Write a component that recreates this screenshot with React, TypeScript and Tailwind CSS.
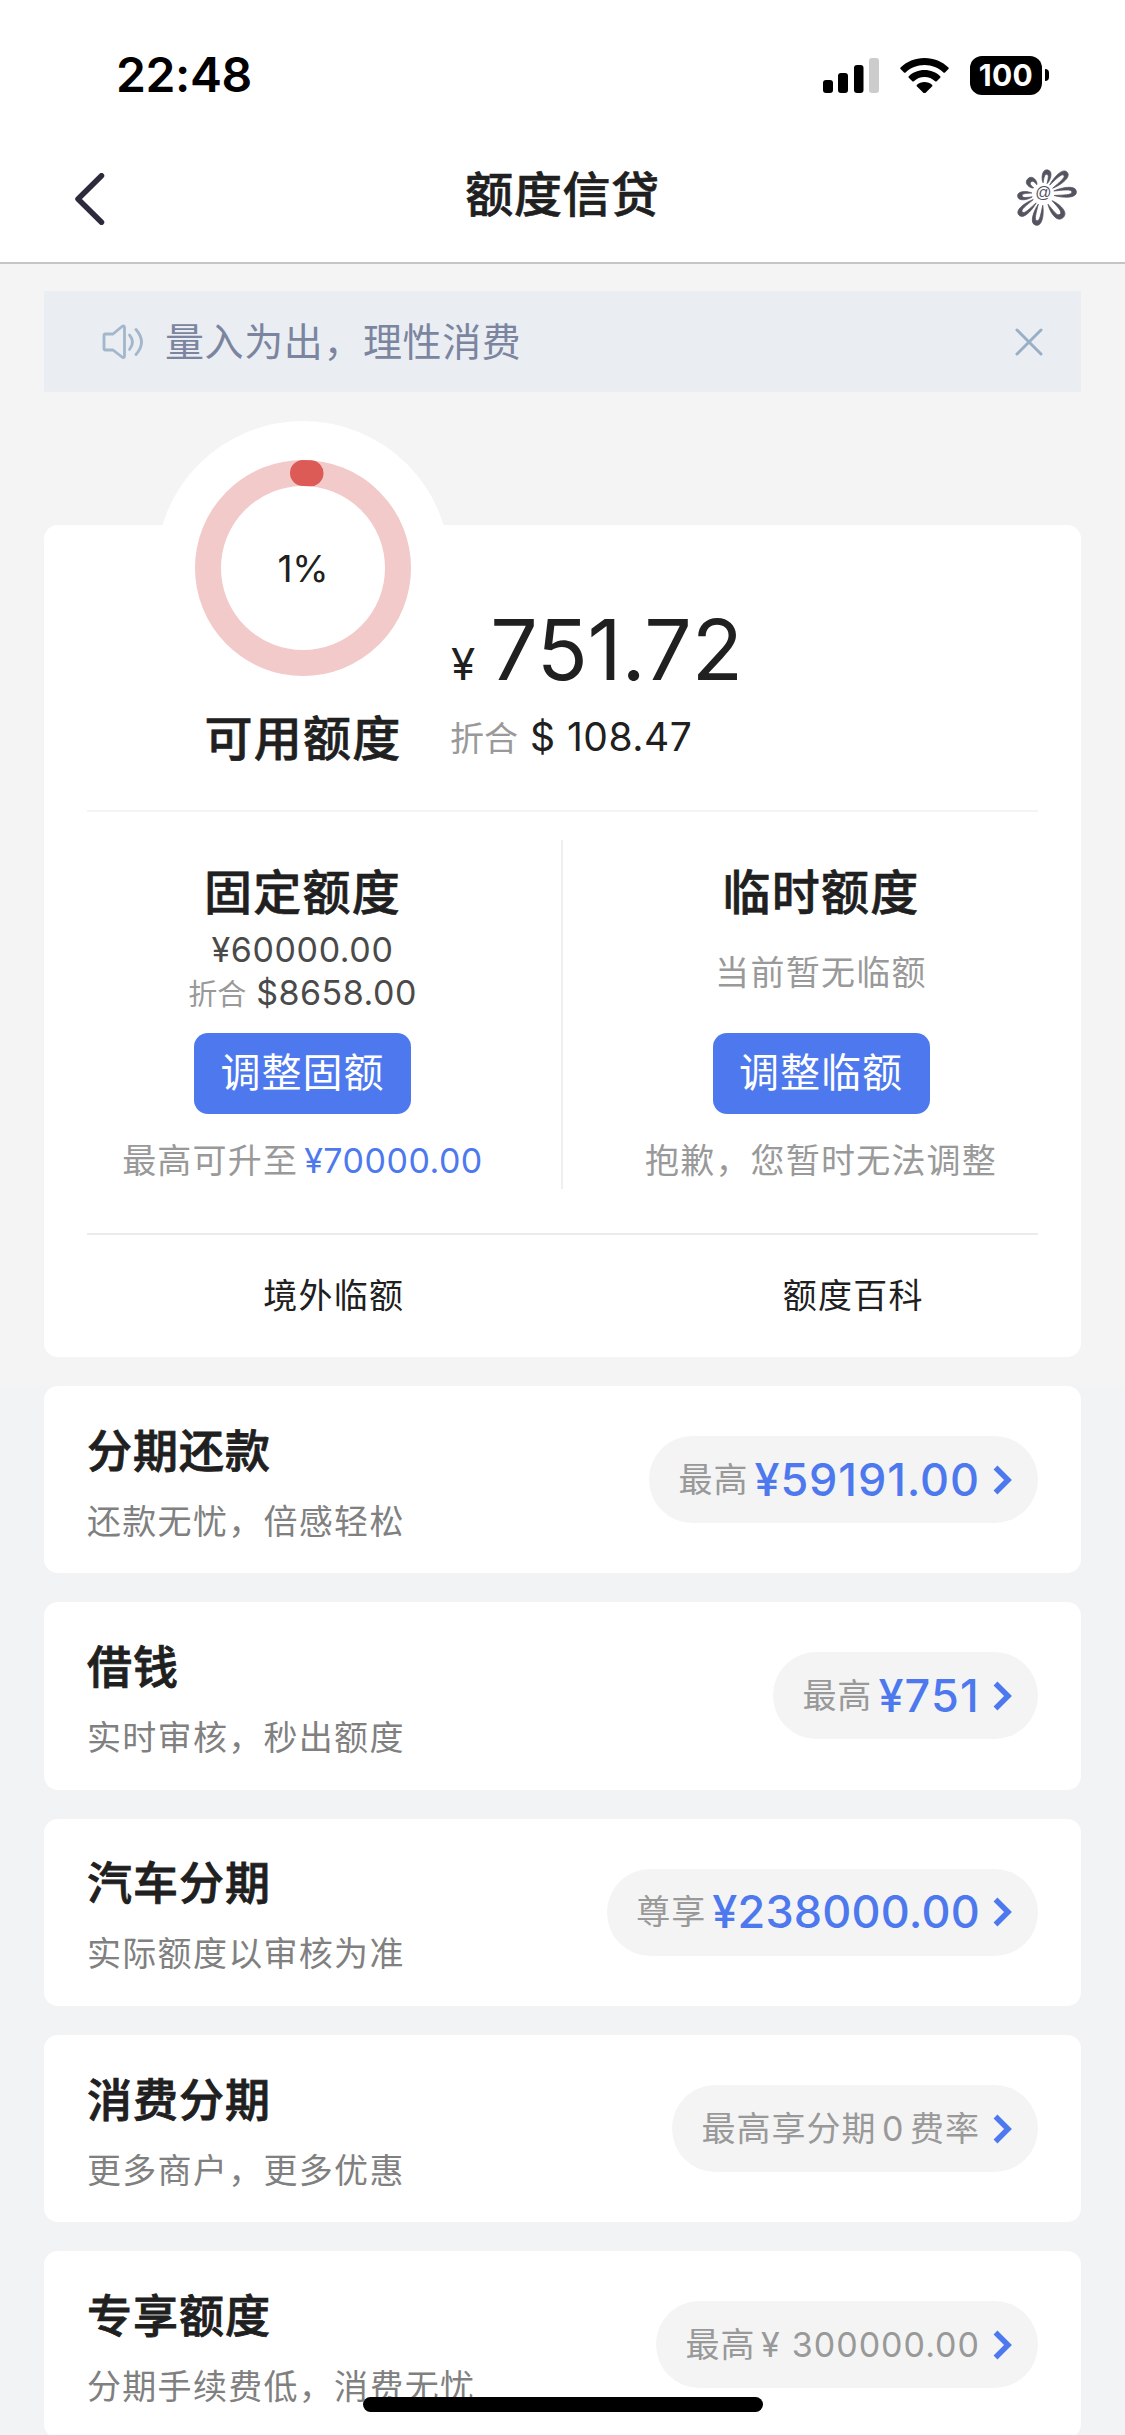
import type { ReactNode } from 'react';

type Product = {
  id: string;
  title: string;
  desc: string;
  label: string;
  amount?: string;
  amountTracking?: string;
};

const products: Product[] = [
  { id: 'repay', title: '分期还款', desc: '还款无忧，倍感轻松', label: '最高', amount: '¥59191.00', amountTracking: 'tracking-[0.9px]' },
  { id: 'loan', title: '借钱', desc: '实时审核，秒出额度', label: '最高', amount: '¥751', amountTracking: 'tracking-[1.200px]' },
  { id: 'car', title: '汽车分期', desc: '实际额度以审核为准', label: '尊享', amount: '¥238000.00', amountTracking: 'tracking-[0.2px]' },
  { id: 'consume', title: '消费分期', desc: '更多商户，更多优惠', label: '最高享分期 0 费率' },
  { id: 'exclusive', title: '专享额度', desc: '分期手续费低，消费无忧', label: '最高 ¥\u00a0 300000.00' },
];

// angle in degrees, length from the flower centre, half width
const petals = [
  [-79, 24.5, 4],
  [-42, 32.5, 4.4],
  [-4, 33.5, 4.6],
  [50, 31, 5.4],
  [103, 32, 4.6],
  [139, 32, 4.4],
  [175, 25.5, 3.8],
  [225, 21.5, 4.4],
];

function StatusBar() {
  return (
    <div className="flex h-[150px] items-center pl-[116px] pr-[76px]">
      <span className="text-[48px] font-semibold leading-none tracking-[-0.4px] text-black">22:48</span>
      <div className="ml-auto flex items-center">
        <svg className="mr-[21px] h-[35px] w-[56px]" viewBox="0 0 56 35">
          <rect x="0" y="22" width="10" height="13" rx="3" />
          <rect x="15" y="15" width="10" height="20" rx="3" />
          <rect x="31" y="7" width="9.5" height="28" rx="3" />
          <rect x="46" y="0" width="10" height="35" rx="3" fill="#cccccc" />
        </svg>
        <svg className="mr-[21px] h-[35px] w-[49px]" viewBox="0 0 49 35">
          <path d="M24.5 0C34 0 42.500 3.700 48.400 9.500Q49.200 10.300 48.400 11.100L45 14.400Q44.200 15.100 43.400 14.400C38.500 9.700 31.900 6.900 24.500 6.900C17.100 6.900 10.500 9.700 5.600 14.400Q4.800 15.100 4 14.400L.6 11.100Q-.2 10.300 .6 9.500C6.500 3.700 15 0 24.500 0Z" />
          <path d="M24.5 12.100C30.700 12.100 36.200 14.400 40.200 18.200Q41 19 40.200 19.800L36.700 23.200Q36 23.900 35.100 23.200C32.300 20.600 28.600 19 24.500 19C20.400 19 16.700 20.600 13.900 23.200Q13 23.900 12.300 23.200L8.800 19.800Q8 19 8.800 18.200C12.800 14.400 18.300 12.100 24.500 12.100Z" />
          <path d="M24.5 24.100C27.400 24.100 30 25.100 32 26.800Q32.900 27.600 32 28.500L25.400 34.900Q24.500 35.700 23.600 34.900L17 28.500Q16.100 27.600 17 26.800C19 25.100 21.600 24.100 24.500 24.100Z" />
        </svg>
        <div className="flex h-[39px] w-[72px] items-center justify-center rounded-[12px] bg-black text-[30px] font-bold leading-none tracking-[0.3px] text-white">
          100
        </div>
        <div className="ml-[3px] h-[12px] w-[4px] rounded-r-full bg-black" />
      </div>
    </div>
  );
}

function Flower() {
  return (
    <svg className="h-[64px] w-[66px]" viewBox="-31 -28 66 64">
      <g fill="#545360" fillRule="evenodd" stroke="#545360" strokeWidth="0.700">
        {petals.map(([angle, len, w]) => (
          <path
            key={angle}
            transform={`rotate(${angle})`}
            d={`M11 ${-w * 0.5}C${len * 0.55} ${-w * 1.1} ${len} ${-w * 1.6} ${len} 0C${len} ${w * 1.6} ${len * 0.55} ${w * 1.1} 11 ${w * 0.5}C${len * 0.6} ${w * 0.5} ${len - 4.5} ${w * 0.7} ${len - 4.5} 0C${len - 4.5} ${-w * 0.7} ${len * 0.6} ${-w * 0.5} 11 ${-w * 0.5}Z`}
          />
        ))}
      </g>
      <text x="0" y="3.800" textAnchor="middle" fill="#545360" className="font-['Liberation_Sans'] text-[16px] italic">
        @
      </text>
    </svg>
  );
}

function NavBar() {
  return (
    <div className="flex h-[114px] items-start justify-between border-b-2 border-[#c4c4c6] pl-[75px] pr-[47px]">
      <svg className="mt-[23px] h-[52px] w-[38px]" viewBox="0 0 38 52" fill="none" stroke="#2d2a3e" strokeWidth="5.500" strokeLinecap="round" strokeLinejoin="round">
        <path d="M26.500 2.750L3 26L26.500 49.250" />
      </svg>
      <h1 className="mt-[15px] text-[48px] font-medium leading-[60px] tracking-[0.6px] text-[#202020] [-webkit-text-stroke:0.6px]">额度信贷</h1>
      <div className="mt-[16px]">
        <Flower />
      </div>
    </div>
  );
}

function Notice() {
  return (
    <div className="mx-[44px] mt-[27px] flex h-[101px] items-center bg-[#eaedf2] pl-[58px] pr-[38px]">
      <svg className="h-[36px] w-[42px]" viewBox="0 0 42 36" fill="none" stroke="#a3b7cc" strokeWidth="2.800" strokeLinecap="round" strokeLinejoin="round">
        <path d="M3.500 10H11L20 2.500Q22.500 1 22.500 3.500V32Q22.500 34.500 20 33L11 26H3.500Q2 26 2 24.500V11.500Q2 10 3.500 10Z" />
        <path d="M27.500 11Q33.500 18 27.500 25.500" />
        <path d="M34 5.500Q45 18 34 30.500" />
      </svg>
      <span className="ml-[21px] text-[39px] leading-[50px] tracking-[0.6px] text-[#7b859f]">量入为出，理性消费</span>
      <svg className="ml-auto h-[28px] w-[28px]" viewBox="0 0 28 28" stroke="#99afc6" strokeWidth="3" strokeLinecap="round">
        <path d="M2 2L26 26M26 2L2 26" />
      </svg>
    </div>
  );
}

function UsageRing() {
  return (
    <div className="-mt-[104px] flex w-[294px] flex-col items-center">
      <div className="grid h-[294px] w-[294px] place-items-center rounded-full bg-white">
        <svg className="col-start-1 row-start-1 h-[216px] w-[216px]" viewBox="0 0 216 216" fill="none" strokeWidth="26">
          <circle cx="108" cy="108" r="95" stroke="#f2caca" />
          <path d="M108 13A95 95 0 0 1 115.500 13.300" stroke="#dc5b56" strokeLinecap="round" />
        </svg>
        <span className="col-start-1 row-start-1 text-[37px] leading-none tracking-[-0.2px]">1%</span>
      </div>
      <div className="text-[48px] font-medium leading-[48px] tracking-[1.200px] [-webkit-text-stroke:0.6px]">可用额度</div>
    </div>
  );
}

type LimitProps = {
  title: string;
  action: string;
  detail: ReactNode;
  hint: ReactNode;
};

function LimitColumn({ title, action, detail, hint }: LimitProps) {
  return (
    <div className="flex flex-col items-center pt-[53px]">
      <h2 className="text-[48px] font-medium leading-[55px] tracking-[1.200px] [-webkit-text-stroke:0.6px]">{title}</h2>
      <div className="mt-[9px] flex h-[86px] flex-col items-center justify-center">{detail}</div>
      <button className="mt-[18px] h-[81px] w-[217px] rounded-[14px] bg-[#4e79ee] pb-[2px] text-[40px] leading-none tracking-[1px] text-white">
        {action}
      </button>
      <div className="mt-[25px] text-[34px] leading-[44px] tracking-[1.200px] text-[#999999]">{hint}</div>
    </div>
  );
}

function SummaryCard() {
  return (
    <section className="mx-[44px] mt-[133px] h-[832px] rounded-[14px] bg-white text-[#202020]">
      <div className="mx-[43px] flex h-[287px] border-b-2 border-[#f4f4f4] pl-[69px]">
        <UsageRing />
        <div className="pt-[83px]">
          <div className="flex h-[84px] items-baseline leading-[84px]">
            <span className="ml-px text-[44px]">¥</span>
            <span className="ml-[15px] text-[84px] tracking-[-0.2px]">751.72</span>
          </div>
          <div className="mt-[22px] flex h-[46px] items-baseline leading-[46px]">
            <span className="text-[34px] text-[#999999]">折合</span>
            <span className="ml-[12px] text-[39px] tracking-[0.5px]">$ 108.47</span>
          </div>
        </div>
      </div>
      <div className="relative grid h-[421px] grid-cols-[517px_520px]">
        <LimitColumn
          title="固定额度"
          action="调整固额"
          detail={
            <>
              <span className="text-[34px] leading-[43px] tracking-[0.6px] text-[#4a4a4a]">¥60000.00</span>
              <span className="flex items-baseline leading-[43px]">
                <span className="text-[29px] text-[#999999]">折合</span>
                <span className="ml-[10px] text-[34px] tracking-[0.5px] text-[#4a4a4a]">$8658.00</span>
              </span>
            </>
          }
          hint={
            <>
              最高可升至
              <span className="ml-[6px] tracking-[0.5px] text-[#4e79ee]">¥70000.00</span>
            </>
          }
        />
        <LimitColumn
          title="临时额度"
          action="调整临额"
          detail={<span className="text-[34px] tracking-[1.300px] text-[#999999]">当前暂无临额</span>}
          hint="抱歉，您暂时无法调整"
        />
        <div className="absolute left-[517px] top-[28px] h-[349px] w-[2px] bg-[#efefef]" />
      </div>
      <div className="mx-[43px] h-[2px] bg-[#ebebeb]" />
      <div className="grid h-[120px] grid-cols-2 items-center text-center text-[34px] tracking-[1.200px]">
        <span className="pl-[61px]">境外临额</span>
        <span className="pl-[63px]">额度百科</span>
      </div>
    </section>
  );
}

function ProductCard({ product }: { product: Product }) {
  return (
    <div className="flex h-[187.300px] shrink-0 items-center justify-between rounded-[14px] bg-white pl-[43px] pr-[43px]">
      <div className="pt-[10px]">
        <h3 className="text-[45px] font-medium leading-[50px] tracking-[1px] text-[#202020] [-webkit-text-stroke:0.8px]">{product.title}</h3>
        <p className="mt-[24px] text-[34px] leading-[42px] tracking-[1.300px] text-[#808080]">{product.desc}</p>
      </div>
      <div className="flex h-[87px] items-center rounded-full bg-[#f4f4f4] pl-[29px] pr-[26px]">
        <div className="flex items-center leading-[60px]">
          <span className="text-[34px] tracking-[1px] text-[#999999] [word-spacing:-5px]">{product.label}</span>
          {product.amount && (
            <span className={`ml-[6px] text-[45px] font-medium text-[#4e79ee] ${product.amountTracking}`}>{product.amount}</span>
          )}
        </div>
        <svg className="ml-[13px] h-[30px] w-[19px]" viewBox="0 0 19 30" fill="none" stroke="#4e79ee" strokeWidth="5.500">
          <path d="M2.500 2.500L15 15L2.500 27.500" />
        </svg>
      </div>
    </div>
  );
}

export default function App() {
  return (
    <div className="relative h-[2435px] w-[1125px] overflow-hidden bg-[#f4f4f4] font-['Inter','Noto_Sans_CJK_SC',sans-serif]">
      <header className="bg-white">
        <StatusBar />
        <NavBar />
      </header>
      <Notice />
      <SummaryCard />
      <div className="mt-[29px] flex h-[1100px] flex-col gap-[29px] bg-[#f2f3f5] px-[44px]">
        {products.map((product) => (
          <ProductCard key={product.id} product={product} />
        ))}
      </div>
      {/* home indicator */}
      <div className="absolute bottom-[23px] left-[363px] h-[15px] w-[400px] rounded-full bg-black" />
    </div>
  );
}
